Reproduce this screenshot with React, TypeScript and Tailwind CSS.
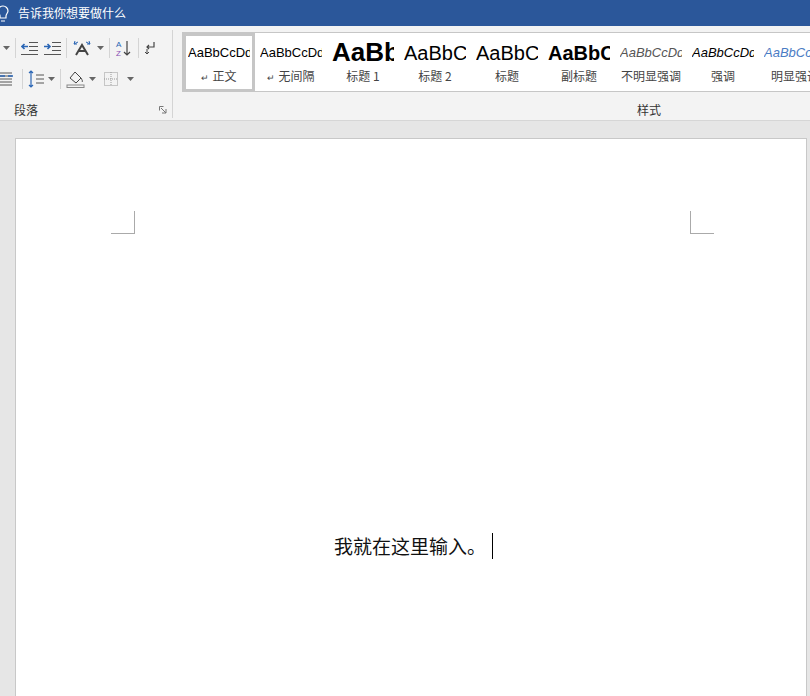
import React from "react";

const F = { fontFamily: '"Microsoft YaHei","Noto Sans CJK SC","Liberation Sans",sans-serif' };

const Caret = () => (
  <svg width="7" height="4" viewBox="0 0 7 4" className="ml-[3px] shrink-0"><path d="M0 0h7L3.5 4z" fill="#666" /></svg>
);
const Sep = () => <div className="w-px h-[20px] bg-[#d4d4d4] mx-[5px] shrink-0" />;

const Lines = ({ dir }: { dir?: string }) => (
  <svg width="17" height="14" viewBox="0 0 17 14" className="shrink-0">
    <g stroke="#555" strokeWidth="1">
      <path d="M8 1.5h9M8 5.5h9M8 9.5h9M0 13.5h17" />
    </g>
    {dir === "l" && <path d="M1 5.5h6M3.5 3l-2.5 2.5 2.5 2.5" stroke="#2b66b5" strokeWidth="1.6" fill="none" />}
    {dir === "r" && <path d="M0 5.5h6M3.5 3l2.5 2.5-2.5 2.5" stroke="#2b66b5" strokeWidth="1.6" fill="none" />}
  </svg>
);

function Style({ sample, label, cls, mark, sel }: { sample: string; label: string; cls: string; mark?: boolean; sel?: boolean }) {
  return (
    <div className={`w-[72px] h-[59px] shrink-0 flex flex-col items-center overflow-hidden ${sel ? "border-[3px] border-[#c6c6c6]" : "border-[3px] border-transparent"}`}>
      <div className={`h-[33px] w-[62px] overflow-hidden whitespace-nowrap flex items-center ${cls}`} style={{ fontFamily: '"Liberation Sans",Arial,sans-serif' }}>
        <span>{sample}</span>
      </div>
      <div className="text-[12px] text-[#444] leading-none mt-[1px] whitespace-nowrap" style={F}>
        {mark && <span className="text-[9px] mr-[3px]">↵</span>}{label}
      </div>
    </div>
  );
}

export default function App() {
  return (
    <div className="w-[810px] h-[696px] overflow-hidden bg-[#e6e6e6] flex flex-col" style={F}>
      <div className="h-[26px] bg-[#2b579a] flex items-center shrink-0">
        <svg width="12" height="20" viewBox="0 0 12 20" className="-ml-[3px]">
          <path d="M1 8a5 5 0 0 1 10 0c0 2-2 3-2 5v2H3v-2c0-2-2-3-2-5zM4 18h4" stroke="#fff" strokeWidth="1.2" fill="none" />
        </svg>
        <span className="text-white text-[12px] ml-[9px]">告诉我你想要做什么</span>
      </div>
      <div className="h-[95px] bg-[#f3f3f3] border-b border-[#d6d6d6] flex shrink-0">
        <div className="w-[172px] shrink-0 flex flex-col pt-[8px] overflow-hidden">
          <div className="flex items-center h-[28px]">
            <Caret />
            <Sep />
            <Lines dir="l" />
            <div className="w-[6px] shrink-0" />
            <Lines dir="r" />
            <Sep />
            <svg width="22" height="16" viewBox="0 0 22 16" className="shrink-0">
              <path d="M4 15l6-10 6 10M6.5 11h7" stroke="#444" strokeWidth="2" fill="none" />
              <path d="M2 4l4-2M18 4l-4-2M3 1l-1 3 3 0M17 1l1 3-3 0" stroke="#2b66b5" strokeWidth="1" fill="none" />
            </svg>
            <Caret />
            <Sep />
            <svg width="18" height="18" viewBox="0 0 18 18" className="shrink-0">
              <text x="1" y="8" fontSize="8" fill="#2b66b5" fontFamily="Liberation Sans">A</text>
              <text x="1" y="17" fontSize="8" fill="#8a4fb3" fontFamily="Liberation Sans">Z</text>
              <path d="M12 2v14M9 13l3 3 3-3" stroke="#444" strokeWidth="1.2" fill="none" />
            </svg>
            <Sep />
            <svg width="14" height="14" viewBox="0 0 14 14" className="shrink-0">
              <path d="M10 1v5H3M5 4L3 6l2 2" stroke="#444" strokeWidth="1.2" fill="none" />
              <path d="M3 8v5M1 11l2 2 2-2" stroke="#444" strokeWidth="1" fill="none" />
            </svg>
          </div>
          <div className="flex items-center h-[30px] mt-[2px]">
            <svg width="13" height="16" viewBox="0 0 13 16" className="shrink-0"><path d="M0 2h12M0 5h12M0 8h12M0 11h12M0 14h12" stroke="#555" /><path d="M0 5h5M8 5h5" stroke="#2b66b5" strokeWidth="1.4" /></svg>
            <div className="w-[4px] shrink-0" />
            <Sep />
            <svg width="17" height="18" viewBox="0 0 17 18" className="shrink-0">
              <path d="M3 1v16M1 3l2-2 2 2M1 15l2 2 2-2" stroke="#2b66b5" strokeWidth="1.2" fill="none" />
              <path d="M8 5h8M8 9h8M8 13h8" stroke="#555" />
            </svg>
            <Caret />
            <Sep />
            <svg width="20" height="18" viewBox="0 0 20 18" className="shrink-0">
              <path d="M4 8l5-6 6 6-5 5z" stroke="#444" fill="none" />
              <path d="M15 8c1 2 2 3 1 4" stroke="#444" fill="none" />
              <rect x="1" y="15" width="17" height="2.5" fill="none" stroke="#888" />
            </svg>
            <Caret />
            <div className="w-[8px] shrink-0" />
            <svg width="14" height="14" viewBox="0 0 14 14" className="shrink-0"><rect x="0.5" y="0.5" width="13" height="13" fill="none" stroke="#999" strokeDasharray="1 1" /><path d="M7 0v14M0 7h14" stroke="#999" strokeDasharray="1 1" /></svg>
            <div className="w-[6px] shrink-0" />
            <Caret />
          </div>
          <div className="flex items-center justify-between mt-[7px] pl-[14px] pr-[5px]">
            <span className="text-[12px] text-[#333]">段落</span>
            <svg width="8" height="8" viewBox="0 0 8 8"><path d="M0.5 0.5h4M0.5 0.5v4M2 2l5 5M7 3v4H3" stroke="#777" fill="none" /></svg>
          </div>
        </div>
        <div className="w-px bg-[#d4d4d4] mt-[4px] mb-[2px] shrink-0" />
        <div className="flex-1 min-w-0 flex flex-col pt-[6px] pl-[9px]">
          <div className="h-[60px] bg-white border border-[#c6c6c6] border-r-0 flex overflow-hidden">
            <Style sample="AaBbCcDd" label="正文" mark sel cls="text-[13px] text-black" />
            <Style sample="AaBbCcDd" label="无间隔" mark cls="text-[13px] text-black" />
            <Style sample="AaBb" label="标题 1" cls="text-[26px] font-bold text-black" />
            <Style sample="AaBbC" label="标题 2" cls="text-[20px] text-black" />
            <Style sample="AaBbC" label="标题" cls="text-[20px] text-black" />
            <Style sample="AaBbC" label="副标题" cls="text-[20px] font-bold text-black" />
            <Style sample="AaBbCcDd" label="不明显强调" cls="text-[13px] italic text-[#555]" />
            <Style sample="AaBbCcDd" label="强调" cls="text-[13px] italic text-black" />
            <Style sample="AaBbCcDd" label="明显强调" cls="text-[13px] italic text-[#4a7cc4]" />
          </div>
          <div className="text-[12px] text-[#333] mt-[9px] pl-[455px]">样式</div>
        </div>
      </div>
      <div className="flex-1 pt-[17px] pl-[15px] pr-[3px]">
        <div className="bg-white h-full border-t border-l border-r border-[#c8c8c8] relative">
          <div className="absolute left-[95px] top-[72px] w-[24px] h-[23px] border-r border-b border-[#aaa]" />
          <div className="absolute left-[674px] top-[72px] w-[24px] h-[23px] border-l border-b border-[#aaa]" />
          <div className="absolute left-[318px] top-[393px] flex items-center text-[19px] text-[#111]">
            <span>我就在这里输入。</span>
            <div className="w-px h-[26px] bg-black ml-[6px]" />
          </div>
        </div>
      </div>
    </div>
  );
}
